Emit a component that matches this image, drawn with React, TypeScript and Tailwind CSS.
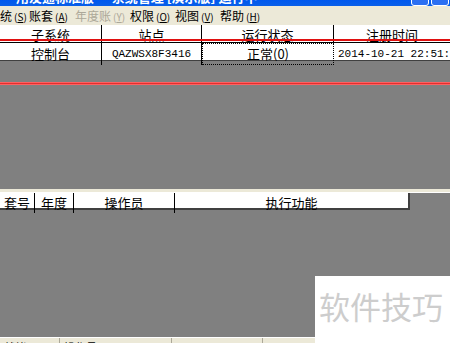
import React from 'react';

const FONT = { fontFamily: '"SimSun", "Noto Sans CJK SC", "Noto Sans", sans-serif' };

const MENU = [
  { label: '统', key: 'S', w: 'w-[29px]' },
  { label: '账套', key: 'A', w: 'w-[46px]' },
  { label: '年度账', key: 'Y', w: 'w-[55px]', disabled: true },
  { label: '权限', key: 'O', w: 'w-[45px]' },
  { label: '视图', key: 'V', w: 'w-[45px]' },
  { label: '帮助', key: 'H', w: 'w-[45px]' },
];

const TOP_COLS = 'grid grid-cols-[102px_100px_132px_1fr]';
const LOG_COLS = 'grid grid-cols-[35px_39px_101px_233px]';

export default function App() {
  return (
    <div className="relative w-[450px] h-[343px] overflow-hidden bg-[#808080] flex flex-col text-black" style={FONT}>
      {/* title bar, mostly scrolled off the top */}
      <div className="h-[6px] shrink-0 overflow-hidden flex items-end justify-between bg-gradient-to-b from-[#0058ee] to-[#0a5fe8]">
        <div className="pl-[16px] text-white font-bold text-[13px] leading-[18px] whitespace-nowrap">
          用友通标准版 — 系统管理 [演示版] 运行中
        </div>
        <div className="flex gap-[2px] pr-[1px]">
          <div className="w-[18px] h-[18px] rounded-[3px] border border-white bg-[#2b6ff2]" />
          <div className="w-[18px] h-[18px] rounded-[3px] border border-white bg-[#2b6ff2]" />
        </div>
      </div>

      {/* menu bar */}
      <div className="h-[19px] shrink-0 bg-[#ece9d8] flex items-center text-[12px] leading-none">
        {MENU.map(m => (
          <div key={m.key} className={`${m.w} shrink-0 whitespace-nowrap ${m.disabled ? 'text-[#aca899]' : 'text-black'}`}>
            {m.label}
            <span className="text-[10px] ml-[2px]">(<span className="underline">{m.key}</span>)</span>
          </div>
        ))}
      </div>

      {/* subsystem table */}
      <div className="shrink-0 bg-white text-[13px]">
        <div className={`${TOP_COLS} h-[18px] border-b border-black`}>
          {['子系统', '站点', '运行状态', '注册时间'].map((h, i) => (
            <div key={h} className={`flex items-center justify-center ${i < 3 ? 'border-r border-black' : ''}`}>{h}</div>
          ))}
        </div>
        <div className={`${TOP_COLS} h-[18px] border-b border-[#404040]`}>
          <div className="flex items-center justify-center border-r border-black">控制台</div>
          <div className="flex items-center justify-center border-r border-black text-[11px]" style={{ fontFamily: '"Liberation Mono", monospace' }}>QAZWSX8F3416</div>
          <div className="flex items-center justify-center border border-dotted border-black">正常(0)</div>
          <div className="flex items-center pl-[4px] text-[11px] whitespace-nowrap" style={{ fontFamily: '"Liberation Mono", monospace' }}>2014-10-21 22:51:</div>
        </div>
      </div>

      <div className="flex-1" />

      {/* splitter */}
      <div className="h-[4px] shrink-0 bg-[#ece9d8] border-b border-white" />

      {/* log header */}
      <div className="shrink-0 flex">
        <div className={`${LOG_COLS} h-[17px] bg-white text-[13px] border-b-2 border-r-2 border-[#404040]`}>
          {['套号', '年度', '操作员', '执行功能'].map((h, i) => (
            <div key={h} className={`flex items-center justify-center ${i < 3 ? 'border-r border-black' : ''}`}>{h}</div>
          ))}
        </div>
      </div>

      <div className="h-[127px] shrink-0" />

      {/* status bar */}
      <div className="h-[6px] shrink-0 bg-[#ece9d8] border-t border-white flex text-[11px] leading-[14px] overflow-hidden">
        <div className="w-[60px] border-r border-[#aca899] pl-[4px] pt-[2px]">就绪</div>
        <div className="w-[112px] border-r border-[#aca899] pl-[4px] pt-[2px]">操作员[admin]</div>
        <div className="w-[91px] border-r border-[#aca899] pl-[4px] pt-[2px]" />
        <div className="flex-1" />
      </div>

      {/* annotation lines */}
      <div className="absolute left-0 right-0 top-[39px] h-[2px] bg-[#e01010]" />
      <div className="absolute left-0 right-0 top-[82px] h-[3px] bg-[#e03030] border-y border-[#ff6060]" />

      {/* watermark */}
      <div className="absolute left-[315px] top-[276px] right-0 bottom-0 bg-white pl-[4px] pt-[14px]">
        <div className="text-[31px] leading-none text-[#cdcdcd] whitespace-nowrap" style={{ fontFamily: '"Noto Sans CJK SC", sans-serif' }}>
          软件技巧
        </div>
      </div>
    </div>
  );
}
